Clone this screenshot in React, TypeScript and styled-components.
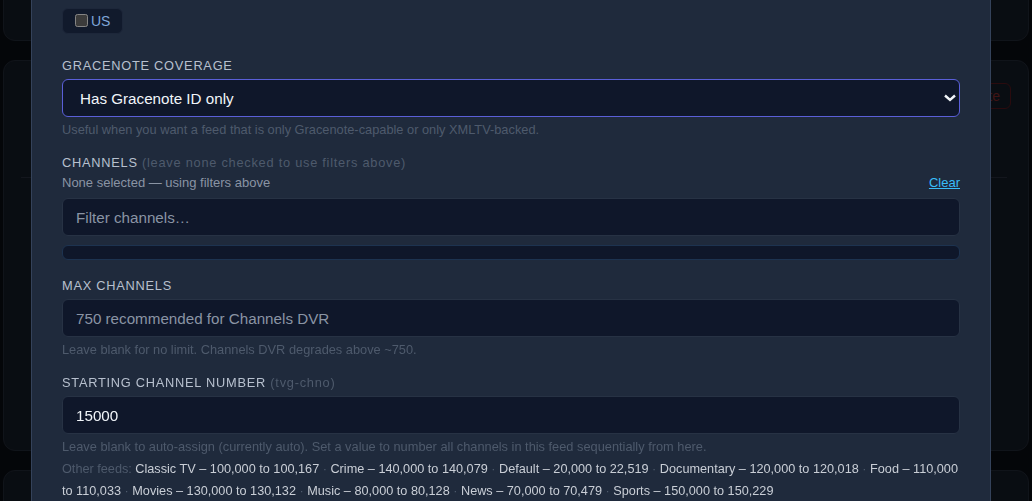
import React from "react";
import styled, { createGlobalStyle } from "styled-components";

const Global = createGlobalStyle`
  html, body { margin: 0; padding: 0; }
  body {
    background: #0b0f16;
    font-family: "Liberation Sans", Arial, sans-serif;
    overflow: hidden;
    height: 501px;
  }
  * { box-sizing: border-box; }
`;

const Page = styled.div`
  display: flex;
  flex-direction: column;
  gap: 19px;
  padding: 0 3px;
  margin-top: -30px;
`;

const Card = styled.section<{ $h: number }>`
  height: ${(p) => p.$h}px;
  background: #161d28;
  border: 1px solid #252d3a;
  border-radius: 12px;
  padding: 22px 17px;
  display: flex;
  flex-direction: column;
`;

const CardHeader = styled.div`
  display: flex;
  justify-content: flex-end;
  height: 26px;
`;

const DangerButton = styled.button`
  height: 26px;
  padding: 0 10px;
  background: transparent;
  border: 1px solid #5e1a20;
  border-radius: 6px;
  color: #8e2c2c;
  font: 14px "Liberation Sans", Arial, sans-serif;
`;

const CardDivider = styled.div`
  margin: 68px 4px 0 0;
  border-top: 1px solid #2a3240;
`;

const Backdrop = styled.div`
  position: fixed;
  inset: 0;
  background: rgba(0, 0, 0, 0.55);
  display: flex;
  align-items: stretch;
  padding-left: 31px;
`;

const Modal = styled.div`
  width: 960px;
  height: 100%;
  background: #1f2a3c;
  border-left: 1px solid #34425a;
  border-right: 1px solid #34425a;
  padding: 8px 30px 0;
  display: flex;
  flex-direction: column;
  color: #cbd5e1;
`;

const Chips = styled.div`
  display: flex;
  gap: 6px;
  margin-bottom: 23px;
`;

const Chip = styled.label`
  display: inline-flex;
  align-items: center;
  height: 26px;
  padding: 0 12px 0 9px;
  background: #111a2c;
  border: 1px solid #1d273a;
  border-radius: 6px;
  color: #7fa6d9;
  font-size: 14px;
`;

const Check = styled.input`
  color-scheme: dark;
  width: 13px;
  height: 13px;
  margin: 0 3px 2px 3px;
`;

const Field = styled.div`
  display: flex;
  flex-direction: column;
  margin-bottom: 16px;
`;

const Label = styled.div`
  font-size: 12.8px;
  line-height: 16px;
  letter-spacing: 0.75px;
  text-transform: uppercase;
  color: #b7c0ce;
  margin: 1px 0 5px;
`;

const LabelNote = styled.span`
  text-transform: none;
  color: #4e5a6c;
`;

const SelectWrap = styled.div`
  position: relative;
`;

const Select = styled.select`
  appearance: none;
  width: 100%;
  height: 38px;
  padding: 0 17px;
  background: #0f172a;
  border: 1px solid #5a5fd8;
  border-radius: 6px;
  color: #f1f5f9;
  font: 15.2px "Liberation Sans", Arial, sans-serif;
  outline: none;
`;

const Chevron = styled.svg`
  position: absolute;
  right: 3px;
  top: 15px;
  pointer-events: none;
`;

const Input = styled.input`
  width: 100%;
  height: 38px;
  padding: 0 13px;
  background: #0f172a;
  border: 1px solid #273244;
  border-radius: 6px;
  color: #f1f5f9;
  font: 15.2px "Liberation Sans", Arial, sans-serif;
  outline: none;
  &::placeholder { color: #8a94a4; }
`;

const Help = styled.div`
  margin-top: 5px;
  font-size: 12.8px;
  line-height: 16px;
  color: #4e5a6c;
`;

const SubRow = styled.div`
  display: flex;
  justify-content: space-between;
  align-items: center;
  font-size: 13px;
  line-height: 16px;
  color: #8a94a4;
  margin: -1px 0 7px;
`;

const LinkButton = styled.a`
  color: #38bdf8;
  text-decoration: underline;
  font-size: 13px;
  cursor: pointer;
`;

const ListBox = styled.div`
  margin: 9px 0 1px;
  height: 15px;
  background: #0f172a;
  border: 1px solid #1d3350;
  border-radius: 6px;
`;

const Feeds = styled.div`
  margin-top: 3px;
  font-size: 12.7px;
  line-height: 22px;
  color: #c9ced6;
`;

const FeedsLead = styled.span`
  color: #4e5a6c;
  margin-right: 3.5px;
`;

const Sep = styled.span`
  color: #4e5a6c;
  margin-left: 3.5px;
`;

const feeds = [
  "Classic TV – 100,000 to 100,167",
  "Crime – 140,000 to 140,079",
  "Default – 20,000 to 22,519",
  "Documentary – 120,000 to 120,018",
  "Food – 110,000 to 110,033",
  "Movies – 130,000 to 130,132",
  "Music – 80,000 to 80,128",
  "News – 70,000 to 70,479",
  "Sports – 150,000 to 150,229",
];

export default function App() {
  return (
    <>
      <Global />
      <Page>
        <Card $h={71} />
        <Card $h={391}>
          <CardHeader>
            <DangerButton>Delete</DangerButton>
          </CardHeader>
          <CardDivider />
        </Card>
        <Card $h={200} />
      </Page>
      <Backdrop>
        <Modal>
          <Chips>
            <Chip>
              <Check type="checkbox" />
              US
            </Chip>
          </Chips>

          <Field>
            <Label>Gracenote coverage</Label>
            <SelectWrap>
              <Select defaultValue="gn">
                <option value="any">Any</option>
                <option value="gn">Has Gracenote ID only</option>
                <option value="xmltv">XMLTV only</option>
              </Select>
              <Chevron width="14" height="8" viewBox="0 0 14 8">
                <polyline points="2,1.5 7,6 12,1.5" fill="none" stroke="#f1f5f9" strokeWidth="2.4" />
              </Chevron>
            </SelectWrap>
            <Help>Useful when you want a feed that is only Gracenote-capable or only XMLTV-backed.</Help>
          </Field>

          <Field>
            <Label>
              Channels <LabelNote>(leave none checked to use filters above)</LabelNote>
            </Label>
            <SubRow>
              <span>None selected — using filters above</span>
              <LinkButton>Clear</LinkButton>
            </SubRow>
            <Input placeholder="Filter channels…" />
            <ListBox />
          </Field>

          <Field>
            <Label>Max channels</Label>
            <Input placeholder="750 recommended for Channels DVR" />
            <Help>Leave blank for no limit. Channels DVR degrades above ~750.</Help>
          </Field>

          <Field>
            <Label>
              Starting channel number <LabelNote>(tvg-chno)</LabelNote>
            </Label>
            <Input defaultValue="15000" />
            <Help>
              Leave blank to auto-assign (currently auto). Set a value to number all channels in this feed
              sequentially from here.
            </Help>
            <Feeds>
              <FeedsLead>Other feeds:</FeedsLead>
              {feeds.map((f, i) => (
                <React.Fragment key={f}>
                  {i > 0 && <Sep>·</Sep>}
                  {i > 0 && " "}
                  <span>{f}</span>
                </React.Fragment>
              ))}
            </Feeds>
          </Field>
        </Modal>
      </Backdrop>
    </>
  );
}
